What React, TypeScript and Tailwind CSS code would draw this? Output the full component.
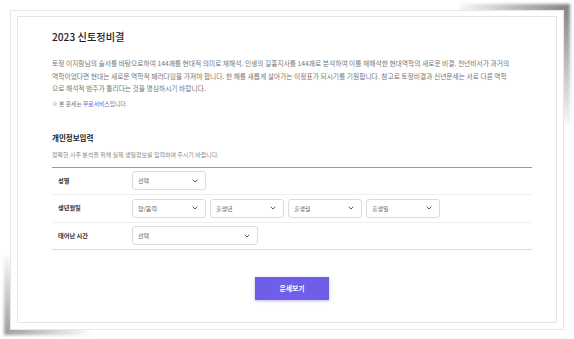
import React from "react";

const font = { fontFamily: '"Noto Sans CJK KR", "Noto Sans", sans-serif' };

function Chevron() {
  return (
    <svg width="6" height="4" viewBox="0 0 6 4" className="shrink-0">
      <polyline points="0.6,0.7 3,3 5.4,0.7" fill="none" stroke="#444" strokeWidth="0.9" />
    </svg>
  );
}

function Select({ label, w }: { label: string; w: string }) {
  return (
    <div className={`${w} h-[19px] border border-[#dcdcdc] rounded-[3px] bg-white flex items-center justify-between pl-[5px] pr-[7px]`}>
      <span className="text-[6px] text-[#666]">{label}</span>
      <Chevron />
    </div>
  );
}

function Row({ label, h, children, last }: { label: string; h: string; children: React.ReactNode; last?: boolean }) {
  return (
    <div className={`${h} flex items-center border-b ${last ? "border-[#dcdcdc]" : "border-[#efefef]"}`}>
      <div className="w-[80px] pl-[6px] text-[6.2px] font-bold text-[#333]">{label}</div>
      <div className="flex gap-[4px]">{children}</div>
    </div>
  );
}

export default function App() {
  return (
    <div className="w-[574px] h-[339px] bg-white relative overflow-hidden" style={font}>
      {/* lifted corner shadows */}
      <div className="absolute left-[460px] top-[4px] w-[110px] h-[120px] blur-[1.5px] bg-[linear-gradient(to_bottom_left,rgba(0,0,0,0.5),rgba(0,0,0,0)_55%)]" />
      <div className="absolute left-[4px] top-[255px] w-[85px] h-[80px] blur-[1.5px] bg-[linear-gradient(to_top_right,rgba(0,0,0,0.4),rgba(0,0,0,0)_55%)]" />
      <div className="relative pt-[10px] pl-[10px]">
        <div className="w-[554px] h-[320px] bg-white border border-[#e6e6e6] pt-[5px] pl-[6px]">
          <div className="w-[540px] h-[307px] border border-[#e4e4e4] pl-[34px]">
            <div className="w-[480px]">
              <h1 className="mt-[13px] h-[14px] leading-[14px] text-[10.2px] font-medium text-[#222]">2023 신토정비결</h1>
              <div className="mt-[13px] text-[6.75px] leading-[12.5px] text-[#777] whitespace-nowrap">
                <div>토정 이지함님의 술서를 바탕으로하여 144괘를 현대적 의미로 재해석. 인생의 길흉지사를 144괘로 분석하여 이를 재해석한 현대역학의 새로운 비결. 천년비서가 과거의</div>
                <div>역학이었다면 현대는 새로운 역학적 패러다임을 가져야 합니다. 한 해를 새롭게 살아가는 이정표가 되시기를 기원합니다. 참고로 토정비결과 신년운세는 서로 다른 역학</div>
                <div>으로 해석적 범주가 틀리다는 것을 명심하시기 바랍니다.</div>
              </div>
              <div className="mt-[4px] h-[10px] leading-[10px] text-[5.8px] text-[#777]">
                ※ 본 운세는 <span className="text-[#6b5ce7]">무료서비스</span>입니다.
              </div>
              <h2 className="mt-[24px] h-[10px] leading-[10px] text-[7.5px] font-bold text-[#222]">개인정보입력</h2>
              <p className="mt-[8px] h-[8px] leading-[8px] text-[6px] text-[#888]">정확한 사주 분석을 위해 실제 생일정보를 입력하여 주시기 바랍니다.</p>
              <div className="mt-[8px] border-t border-[#9a9a9a]">
                <Row label="성별" h="h-[27px]">
                  <Select label="선택" w="w-[74px]" />
                </Row>
                <Row label="생년월일" h="h-[28px]">
                  <Select label="양/음력" w="w-[74px]" />
                  <Select label="출생년" w="w-[74px]" />
                  <Select label="출생월" w="w-[74px]" />
                  <Select label="출생일" w="w-[74px]" />
                </Row>
                <Row label="태어난 시간" h="h-[27px]" last>
                  <Select label="선택" w="w-[126px]" />
                </Row>
              </div>
              <div className="mt-[27px] flex justify-center">
                <button className="w-[74px] h-[23px] bg-[#6e5ee8] text-white text-[6.8px] font-bold shadow-[0_1px_3px_rgba(80,60,200,0.35)]">
                  운세보기
                </button>
              </div>
            </div>
          </div>
        </div>
      </div>
    </div>
  );
}
